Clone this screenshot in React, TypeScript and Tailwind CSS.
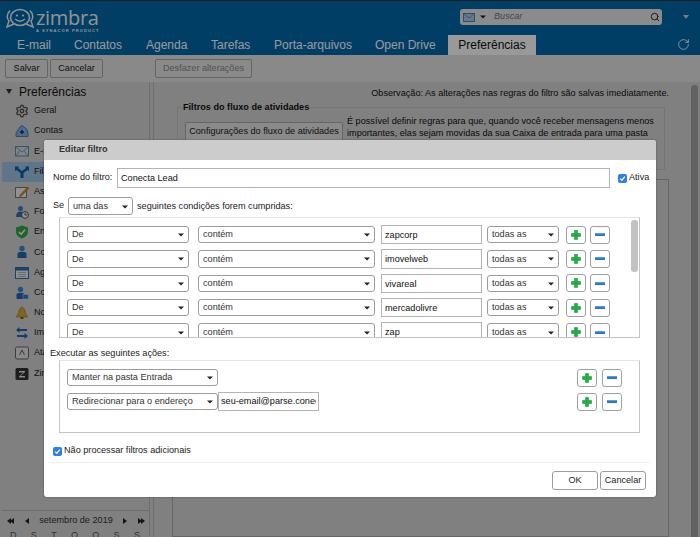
import { RotateCw, Search, Settings } from "lucide-react";
import type { ReactNode } from "react";

const font = "font-['Liberation_Sans',Arial,sans-serif]";

const tabs = ["E-mail", "Contatos", "Agenda", "Tarefas", "Porta-arquivos", "Open Drive"];
const tabWidths = ["w-[57px]", "w-[72px]", "w-[65px]", "w-[63px]", "w-[101px]", "w-[73px]"];
const conditions = ["zapcorp", "imovelweb", "vivareal", "mercadolivre", "zap"];

function Svg({ children }: { children: ReactNode }) {
  return (
    <svg viewBox="0 0 14 14" className="w-[14px] h-[14px] shrink-0">
      {children}
    </svg>
  );
}

const sideItems: { label: string; icon: ReactNode; selected?: boolean }[] = [
  { label: "Geral", icon: <Settings size={14} strokeWidth={2.4} className="text-[#555]" /> },
  {
    label: "Contas",
    icon: (
      <Svg>
        <path d="M1 12.5 V9 L5 3 L7 1.5 L9 3 Q13 5 13 9 V12.5 Z" fill="#7fb4e4" stroke="#2f6fae" strokeWidth="0.8" />
        <path d="M7 6 V10 M5 8 H9" stroke="#103a66" strokeWidth="1.4" />
      </Svg>
    ),
  },
  {
    label: "E-mail",
    icon: (
      <Svg>
        <rect x="0.5" y="2.5" width="13" height="9.5" fill="#cfdcea" stroke="#6f8ba8" />
        <path d="M1 3 L7 8 L13 3 M1 12 L5 6.5 M13 12 L9 6.5" fill="none" stroke="#6f8ba8" strokeWidth="0.8" />
      </Svg>
    ),
  },
  {
    label: "Filtros",
    selected: true,
    icon: (
      <Svg>
        <path d="M0 1.5 H4 L3 3 L7 6 L11 3 L10 1.5 H14 V6 L12.5 5 L8.5 8 V13 H5.5 V8 L1.5 5 L0 6 Z" fill="#0b5fb0" />
      </Svg>
    ),
  },
  {
    label: "Assinaturas",
    icon: (
      <Svg>
        <rect x="0.5" y="2.5" width="11" height="10" fill="#f2f2f2" stroke="#777" />
        <path d="M5 10 L12.5 2 L14 3.2 L6.5 11 L4.5 11.5 Z" fill="#e08a2c" stroke="#8a4b12" strokeWidth="0.4" />
      </Svg>
    ),
  },
  {
    label: "Fora do escritório",
    icon: (
      <Svg>
        <circle cx="5.5" cy="3.5" r="2.5" fill="#3d7fc4" />
        <path d="M1 12 Q1 6.5 5.5 6.5 Q10 6.5 10 12 Z" fill="#2f6fb4" />
        <circle cx="10" cy="10" r="3.4" fill="#eee" stroke="#555" />
        <path d="M10 8 V10 H12" fill="none" stroke="#333" strokeWidth="0.8" />
      </Svg>
    ),
  },
  {
    label: "Endereços confiáveis",
    icon: (
      <Svg>
        <path d="M7 0.5 L13 2.5 V7 Q13 11 7 13.5 Q1 11 1 7 V2.5 Z" fill="#2fa84a" />
        <path d="M4 7 L6.2 9.2 L10 4.8" fill="none" stroke="#fff" strokeWidth="1.4" />
      </Svg>
    ),
  },
  {
    label: "Contatos",
    icon: (
      <Svg>
        <circle cx="7" cy="3.5" r="2.7" fill="#3d86d0" />
        <path d="M2.5 13 V9 Q2.5 6.8 7 6.8 Q11.5 6.8 11.5 9 V13 Z" fill="#1f68b6" />
      </Svg>
    ),
  },
  {
    label: "Agenda",
    icon: (
      <Svg>
        <rect x="0.5" y="1.5" width="13" height="11" fill="#e9eef4" stroke="#2f6fb4" />
        <rect x="1" y="2" width="12" height="2.5" fill="#2f6fb4" />
        <path d="M3 6.5 H11 M3 8.5 H11 M3 10.5 H11" stroke="#a9b4bf" strokeWidth="0.9" />
      </Svg>
    ),
  },
  {
    label: "Compartilhamento",
    icon: (
      <Svg>
        <circle cx="5.5" cy="3.5" r="2.7" fill="#3d86d0" />
        <path d="M1.5 13 V8.5 Q1.5 6.8 5.5 6.8 Q9.5 6.8 9.5 8.5 V13 Z" fill="#1f68b6" />
        <rect x="8" y="8.5" width="5.5" height="4.5" fill="#2f7cc8" stroke="#d0e0f0" strokeWidth="0.5" />
      </Svg>
    ),
  },
  {
    label: "Notificações",
    icon: (
      <Svg>
        <path d="M7 0.8 Q10.5 2.5 10.5 7 L12.5 11 H1.5 L3.5 7 Q3.5 2.5 7 0.8 Z" fill="#d5a63f" stroke="#8d6a1c" strokeWidth="0.5" />
        <rect x="5.5" y="11" width="3" height="2" fill="#7a5b18" />
      </Svg>
    ),
  },
  {
    label: "Importar/Exportar",
    icon: (
      <Svg>
        <path d="M1 4 L4.5 1 V3 H12 V5 H4.5 V7 Z" fill="#1f68b6" />
        <path d="M13 10 L9.5 7 V9 H2 V11 H9.5 V13 Z" fill="#1f68b6" />
      </Svg>
    ),
  },
  {
    label: "Atalhos",
    icon: (
      <Svg>
        <rect x="0.5" y="1" width="13" height="12" rx="1.5" fill="#e4e4e4" stroke="#666" />
        <path d="M4.5 9 L7 4 L9.5 9" fill="none" stroke="#555" strokeWidth="0.9" />
      </Svg>
    ),
  },
  {
    label: "Zimlets",
    icon: (
      <Svg>
        <rect x="0.5" y="1" width="13" height="12" rx="1.5" fill="#333" />
        <path d="M4 4 H10 V5 L5.5 9 H10 V10.5 H4 V9.5 L8.5 5.5 H4 Z" fill="#e8e8e8" />
      </Svg>
    ),
  },
];

function Btn({ children, className = "text-[#222]" }: { children: ReactNode; className?: string }) {
  return (
    <button className={`rounded-[2px] border border-[#a8a8a8] bg-[#e6e6e6] text-[9.15px] ${className}`}>
      {children}
    </button>
  );
}

function Arrow() {
  return (
    <svg viewBox="0 0 6 4" className="w-[6px] h-[4px] shrink-0">
      <path d="M0 0.5 H6 L3 3.5 Z" fill="#222" />
    </svg>
  );
}

function Select({ value, className }: { value: string; className: string }) {
  return (
    <div className={`h-[17.5px] flex items-center justify-between pl-[4px] pr-[4px] bg-white border border-[#9c9c9c] rounded-[3px] text-[9.15px] text-[#333] shrink-0 ${className}`}>
      <span>{value}</span>
      <Arrow />
    </div>
  );
}

function PlusBtn() {
  return (
    <div className="w-[20px] h-[18px] shrink-0 flex items-center justify-center bg-white border border-[#a0a0a0] rounded-[3px]">
      <svg viewBox="0 0 10 10" className="w-[10px] h-[10px]">
        <path d="M3.5 0.5 H6.5 V3.5 H9.5 V6.5 H6.5 V9.5 H3.5 V6.5 H0.5 V3.5 H3.5 Z" fill="#16b43c" stroke="#0e8a2c" strokeWidth="0.5" />
      </svg>
    </div>
  );
}

function MinusBtn() {
  return (
    <div className="w-[20px] h-[18px] shrink-0 flex items-center justify-center bg-white border border-[#a0a0a0] rounded-[3px]">
      <div className="w-[10px] h-[3px] bg-gradient-to-b from-[#6aaeea] via-[#2f80d0] to-[#1f6fc0]" />
    </div>
  );
}

function Check() {
  return (
    <div className="w-[9px] h-[9px] shrink-0 flex items-center justify-center rounded-[2px] bg-[#2a7ef0]">
      <svg viewBox="0 0 8 8" className="w-[7px] h-[7px]">
        <path d="M1.3 4.2 L3.2 6 L6.7 1.8" fill="none" stroke="#fff" strokeWidth="1.4" />
      </svg>
    </div>
  );
}

function Logo() {
  return (
    <div className="flex items-start pl-[5px] pt-[7px] h-[34px]">
      <svg viewBox="0 0 30 20" className="w-[30px] h-[20px] shrink-0">
        <ellipse cx="15" cy="9.5" rx="9.5" ry="8" fill="none" stroke="#f2f2f2" strokeWidth="1.6" />
        <path d="M5 2.5 Q0 8 4 13 L2 19 L9 16" fill="none" stroke="#f2f2f2" strokeWidth="1.5" />
        <path d="M25 2.5 Q30 8 26 13 L28 19 L21 16" fill="none" stroke="#f2f2f2" strokeWidth="1.5" />
        <circle cx="12" cy="7.5" r="1.1" fill="#f2f2f2" />
        <circle cx="18" cy="7.5" r="1.1" fill="#f2f2f2" />
        <path d="M10 11 Q15 15.5 20 11" fill="none" stroke="#f2f2f2" strokeWidth="1.4" />
      </svg>
      <div className="ml-[1px] flex flex-col text-[#f4f4f4]">
        <span className="font-['Open_Sans',sans-serif] text-[20px] leading-[19px] tracking-[-0.3px]">zimbra</span>
        <span className="text-[4px] leading-[6px] mt-[1px] tracking-[1.1px] font-bold">A SYNACOR PRODUCT</span>
      </div>
    </div>
  );
}

function Header() {
  return (
    <header className="h-[55px] shrink-0 bg-[#0068ab] border-t border-[#333] flex flex-col">
      <div className="flex justify-between h-[34px]">
        <Logo />
        <div className="flex items-start pt-[8px] pr-[11px]">
          <div className="w-[202px] h-[16px] rounded-[3px] bg-[#e8e8e8] flex items-center pl-[3px] pr-[2px]">
            <svg viewBox="0 0 12 9" className="w-[12px] h-[9px] shrink-0">
              <rect x="0.5" y="0.5" width="11" height="8" fill="#a9c9ec" stroke="#4f81b8" />
              <path d="M1 1 L6 5 L11 1" fill="none" stroke="#4f81b8" strokeWidth="0.8" />
            </svg>
            <div className="ml-[5px]"><Arrow /></div>
            <span className="ml-[8px] text-[9.15px] italic text-[#777]">Buscar</span>
            <Search size={10} strokeWidth={2.2} className="ml-auto text-[#222]" />
          </div>
          <svg viewBox="0 0 6 4" className="ml-[21px] mt-[6px] w-[6px] h-[4px]">
            <path d="M0 0 H6 L3 4 Z" fill="#d0d0d0" />
          </svg>
        </div>
      </div>
      <nav className="flex items-end h-[20px] text-[12px] text-white">
        <div className="w-[17px]" />
        {tabs.map((t, i) => (
          <div key={t} className={`${tabWidths[i]} h-[20px] leading-[20px]`}>{t}</div>
        ))}
        <div className="w-[88px] h-[20px] leading-[20px] bg-white text-[#111] text-center">Preferências</div>
        <RotateCw size={13} strokeWidth={1.6} className="ml-auto mr-[10px] mb-[4px] text-white" />
      </nav>
    </header>
  );
}

function CalArrow({ dir, double }: { dir: "l" | "r"; double?: boolean }) {
  const d = dir === "l" ? "M4 0 V6 L0 3 Z" : "M0 0 V6 L4 3 Z";
  return (
    <svg viewBox={double ? "0 0 7 6" : "0 0 4 6"} className={`${double ? "w-[7px]" : "w-[4px]"} h-[6px] shrink-0`}>
      <path d={d} fill="#222" />
      {double && <path d={d} transform="translate(3 0)" fill="#222" />}
    </svg>
  );
}

function Sidebar() {
  return (
    <aside className="w-[150px] shrink-0 flex flex-col border-r border-[#b8b8b8] text-[9.15px] text-[#222]">
      <div className="h-[19px] shrink-0 flex items-center pl-[6px]">
        <svg viewBox="0 0 6 5" className="w-[6px] h-[5px]">
          <path d="M0 0 H6 L3 5 Z" fill="#333" />
        </svg>
        <span className="ml-[7px] text-[12px] text-[#111]">Preferências</span>
      </div>
      {sideItems.map((it) => (
        <div
          key={it.label}
          className={`h-[20.2px] shrink-0 flex items-center gap-[5px] pl-[13px] ml-[2px] ${it.selected ? "bg-[#9fc5e6]" : ""}`}
        >
          {it.icon}
          <span>{it.label}</span>
        </div>
      ))}
      <div className="mt-auto h-[27px] ml-[2px] border-t border-[#b8b8b8] text-[#333] overflow-hidden">
        <div className="flex items-center justify-between h-[19px] pt-[1px] pl-[5px] pr-[4px]">
          <CalArrow dir="l" double />
          <CalArrow dir="l" />
          <span>setembro de 2019</span>
          <CalArrow dir="r" />
          <CalArrow dir="r" double />
        </div>
        <div className="flex justify-between pl-[8px] pr-[9px] text-[9px] leading-[10px] text-[#555]">
          {["D", "S", "T", "Q", "Q", "S", "S"].map((d, i) => (
            <span key={i}>{d}</span>
          ))}
        </div>
      </div>
    </aside>
  );
}

function Main() {
  return (
    <main className="flex-1 flex text-[9.15px] text-[#111] border-l border-[#b8b8b8] ml-[3px]">
      <div className="w-[537px] shrink-0 flex flex-col">
        <p className="h-[19px] pt-[5px] pr-[22px] text-right leading-[12px]">
          Observação: As alterações nas regras do filtro são salvas imediatamente.
        </p>
        <fieldset className="ml-[23px] mr-[26px] h-[69px] border border-[#c4c4c4] pl-[7px] pt-[1px] flex">
          <legend className="-ml-[2px] font-bold leading-[12px]">Filtros do fluxo de atividades</legend>
          <div className="flex gap-[4px]">
            <Btn className="w-[158px] shrink-0 h-[19px] mt-[8px] text-[#222]">Configurações do fluxo de atividades</Btn>
            <p className="leading-[11.5px] w-[312px] mt-[2px]">
              É possível definir regras para que, quando você receber mensagens menos importantes, elas sejam movidas da sua
              Caixa de entrada para uma pasta
            </p>
          </div>
        </fieldset>
        <div className="flex-1 mt-[9px] ml-[18px] mr-[22px] border border-[#a8a8a8]" />
      </div>
      <div className="pt-[3px]">
        <div className="w-[7px] h-[460px] bg-[#a4a4a4] rounded-[3px]" />
      </div>
    </main>
  );
}

function Dialog() {
  return (
    <div className={`absolute left-[44px] top-[140px] w-[612px] h-[357px] bg-white rounded-[3px] shadow-[0_0_2px_rgba(0,0,0,0.4)] text-[9.15px] text-[#222] ${font}`}>
      <div className="h-[20px] bg-[#cccccc] rounded-t-[3px] pl-[15px] leading-[19px] font-bold text-[#333]">Editar filtro</div>
      <div className="pl-[9px] pr-[6px]">
        <div className="mt-[8px] h-[20px] flex items-center">
          <span className="w-[64px] shrink-0">Nome do filtro:</span>
          <div className="w-[493px] h-[20px] border border-[#b4b4b4] pl-[3px] leading-[18px] text-[#111]">Conecta Lead</div>
          <div className="ml-[8px]"><Check /></div>
          <span className="ml-[2px]">Ativa</span>
        </div>
        <div className="mt-[9px] h-[18px] flex items-center">
          <span className="w-[15px]">Se</span>
          <Select value="uma das" className="w-[65px] pt-[1px]" />
          <span className="ml-[4px] pt-[1px]">seguintes condições forem cumpridas:</span>
        </div>
        <div className="mt-[2px] ml-[6px] w-[581px] h-[121px] border border-[#c4c4c4] border-t-[#e6e6e6] pl-[7px] pt-[7px] overflow-hidden flex">
          <div className="w-[543px] shrink-0 flex flex-col">
            {conditions.map((c) => (
              <div key={c} className="h-[24.4px] shrink-0 flex items-start">
                <div className="flex items-center h-[19px]">
                  <Select value="De" className="w-[122px] pt-[1px]" />
                  <Select value="contém" className="w-[177px] ml-[9px] pt-[1px]" />
                  <div className="w-[101px] h-[19.5px] ml-[6px] pl-[3px] border border-[#b4b4b4] leading-[19px] text-[#111] shrink-0">{c}</div>
                  <Select value="todas as" className="w-[72px] ml-[5px] pt-[1px]" />
                  <div className="ml-[7px]"><PlusBtn /></div>
                  <div className="ml-[4px]"><MinusBtn /></div>
                </div>
              </div>
            ))}
          </div>
          <div className="ml-[21px] -mt-[5px] w-[7px] h-[52px] rounded-[3px] bg-[#c2c2c2] shrink-0" />
        </div>
        <div className="mt-[9px] h-[12px] leading-[12px] -ml-[3px]">Executar as seguintes ações:</div>
        <div className="mt-[1px] ml-[6px] w-[581px] h-[73px] border border-[#c4c4c4] border-t-[#e6e6e6] pt-[7px] pl-[7px] flex flex-col gap-[5px]">
          <div className="h-[19px] flex items-center">
            <Select value="Manter na pasta Entrada" className="w-[151px]" />
            <div className="ml-[359px]"><PlusBtn /></div>
            <div className="ml-[5px]"><MinusBtn /></div>
          </div>
          <div className="h-[19px] flex items-center">
            <Select value="Redirecionar para o endereço" className="w-[151px]" />
            <div className="w-[101px] h-[19px] shrink-0 border border-[#b4b4b4] px-[2px] leading-[17px] text-[#111]">
              <div className="overflow-hidden whitespace-nowrap">seu-email@parse.conecta</div>
            </div>
            <div className="ml-[258px]"><PlusBtn /></div>
            <div className="ml-[5px]"><MinusBtn /></div>
          </div>
        </div>
        <div className="mt-[12px] h-[12px] flex items-center gap-[2px]">
          <Check />
          <span>Não processar filtros adicionais</span>
        </div>
        <div className="mt-[5px] -ml-[3px] w-[600px] h-px bg-[#f0f0f0]" />
        <div className="mt-[8px] mr-[4px] flex justify-end gap-[2px]">
          <button className="w-[46px] h-[19px] bg-white border border-[#9c9c9c] rounded-[3px]">OK</button>
          <button className="w-[46px] h-[19px] bg-white border border-[#9c9c9c] rounded-[3px]">Cancelar</button>
        </div>
      </div>
    </div>
  );
}

export default function App() {
  return (
    <div className={`relative w-[700px] h-[537px] overflow-hidden flex flex-col bg-[#d6d6d6] ${font}`}>
      <Header />
      <div className="h-[27px] shrink-0 flex items-center gap-[2px] pl-[5px] bg-[#e4e4e4]">
        <Btn className="w-[43px] h-[19px] text-[#222]">Salvar</Btn>
        <Btn className="w-[53px] h-[19px] text-[#222]">Cancelar</Btn>
        <Btn className="w-[97px] h-[19px] ml-[50px] text-[#8a8a8a]">Desfazer alterações</Btn>
      </div>
      <div className="flex-1 flex min-h-0">
        <Sidebar />
        <Main />
      </div>
      <div className="absolute inset-0 bg-black/40" />
      <Dialog />
    </div>
  );
}
